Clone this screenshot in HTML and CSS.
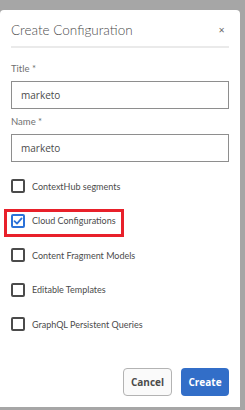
FILE: index.html
```html
<!DOCTYPE html>
<html>
<head>
<meta charset="utf-8">
<link rel="stylesheet" href="styles.css">
</head>
<body>
<div class="dialog">
  <div class="header">
    <h1 class="title">Create Configuration</h1>
    <span class="close">&#x2715;</span>
  </div>
  <div class="divider"></div>
  <div class="field">
    <label class="label">Title *</label>
    <div class="input">marketo</div>
  </div>
  <div class="field">
    <label class="label">Name *</label>
    <div class="input">marketo</div>
  </div>
  <div class="checks">
    <div class="check"><span class="box"></span><span class="ctext">ContextHub segments</span></div>
    <div class="check highlight"><span class="box checked"><svg width="10" height="10" viewBox="0 0 10 10"><path d="M1.5 5.2 L4 7.6 L8.6 2.4" fill="none" stroke="#2c72d8" stroke-width="1.8" stroke-linecap="round" stroke-linejoin="round"/></svg></span><span class="ctext">Cloud Configurations</span></div>
    <div class="check"><span class="box"></span><span class="ctext">Content Fragment Models</span></div>
    <div class="check"><span class="box"></span><span class="ctext">Editable Templates</span></div>
    <div class="check"><span class="box"></span><span class="ctext">GraphQL Persistent Queries</span></div>
  </div>
  <div class="footer">
    <button class="btn cancel">Cancel</button>
    <button class="btn create">Create</button>
  </div>
</div>
</body>
</html>
```
FILE: styles.css
```css
html, body {
  margin: 0;
  padding: 0;
  background: #a6a6a6;
  width: 245px;
  height: 410px;
  overflow: hidden;
}
.dialog {
  margin-top: 10px;
  width: 240px;
  height: 397px;
  background: #fff;
  border-radius: 4px 4px 0 0;
  box-sizing: border-box;
  padding: 0 11px 0 11px;
  font-family: "Lato", "Open Sans", sans-serif;
  color: #4b4b4b;
  display: flex;
  flex-direction: column;
}
.header {
  display: flex;
  align-items: center;
  justify-content: space-between;
  height: 36px;
}
.title {
  margin: 0;
  margin-top: 4px;
  font-size: 13.5px;
  font-weight: 300;
  color: #4b4b4b;
}
.close {
  font-family: "DejaVu Sans", sans-serif;
  font-size: 8px;
  color: #6e6e6e;
  margin-right: 4px;
  margin-top: 4px;
}
.divider {
  height: 2px;
  background: #eaeaea;
}
.field {
  display: flex;
  flex-direction: column;
}
.label {
  font-size: 9.5px;
  color: #707070;
  line-height: 12px;
  margin-top: 15px;
}
.field + .field .label { margin-top: 7px; }
.input {
  margin-top: 6px;
  height: 28px;
  box-sizing: border-box;
  border: 1px solid #8e8e8e;
  font-family: "Open Sans", sans-serif;
  font-size: 10px;
  color: #4b4b4b;
  padding-left: 9px;
  display: flex;
  align-items: center;
}
.checks {
  margin-top: 7px;
  display: flex;
  flex-direction: column;
}
.check {
  display: flex;
  align-items: center;
  height: 34.5px;
  position: relative;
}
.box {
  width: 14px;
  height: 14px;
  box-sizing: border-box;
  border: 2px solid #4b4b4b;
  border-radius: 2px;
  background: #fff;
  display: flex;
  align-items: center;
  justify-content: center;
}
.box.checked {
  border-color: #2c72d8;
}
.ctext {
  margin-left: 7px;
  font-size: 9px;
  color: #4b4b4b;
}
.highlight::before {
  content: "";
  position: absolute;
  left: -7px;
  top: 5px;
  width: 114px;
  height: 22px;
  border: 3px solid #e8202a;
}
.footer {
  margin-top: auto;
  margin-bottom: 11px;
  display: flex;
  justify-content: flex-end;
  gap: 9px;
}
.btn {
  height: 28px;
  border-radius: 4px;
  font-family: "Open Sans", sans-serif;
  font-weight: 700;
  font-size: 10px;
  padding: 0;
}
.cancel {
  width: 49px;
  background: #fafafa;
  border: 1px solid #b3b3b3;
  color: #4b4b4b;
}
.create {
  width: 48px;
  background: #326ec8;
  border: none;
  color: #fff;
}
```
